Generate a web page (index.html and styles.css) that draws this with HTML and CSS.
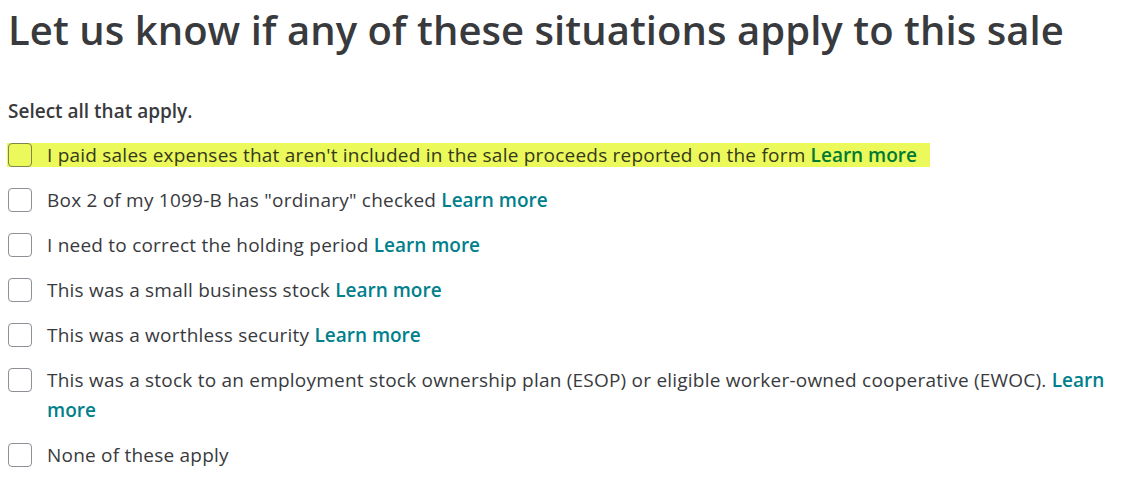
FILE: index.html
```html
<!DOCTYPE html>
<html lang="en">
<head>
<meta charset="utf-8">
<title>Situations</title>
<link rel="stylesheet" href="styles.css">
</head>
<body>
<h1 class="title">Let us know if any of these situations apply to this sale</h1>
<p class="instr">Select all that apply.</p>
<ul class="options">
  <li class="option highlight"><span class="box"></span><span class="label">I paid sales expenses that aren't included in the sale proceeds reported on the form <a class="link">Learn more</a></span></li>
  <li class="option"><span class="box"></span><span class="label">Box 2 of my 1099-B has "ordinary" checked <a class="link">Learn more</a></span></li>
  <li class="option"><span class="box"></span><span class="label">I need to correct the holding period <a class="link">Learn more</a></span></li>
  <li class="option"><span class="box"></span><span class="label">This was a small business stock <a class="link">Learn more</a></span></li>
  <li class="option"><span class="box"></span><span class="label">This was a worthless security <a class="link">Learn more</a></span></li>
  <li class="option"><span class="box"></span><span class="label">This was a stock to an employment stock ownership plan (ESOP) or eligible worker-owned cooperative (EWOC). <a class="link">Learn more</a></span></li>
  <li class="option"><span class="box"></span><span class="label">None of these apply</span></li>
</ul>
</body>
</html>
```
FILE: styles.css
```css
html, body {
  margin: 0;
  background: #ffffff;
}
body {
  padding: 0 8px;
  font-family: "Open Sans", "Noto Sans", sans-serif;
  color: #393a3d;
}
.title {
  margin: 0;
  padding-top: 4px;
  font-size: 40px;
  line-height: 52px;
  font-weight: 600;
  letter-spacing: 0.06px;
  color: #393a3d;
}
.instr {
  margin: 40px 0 0 0;
  font-size: 19px;
  line-height: 30px;
  font-weight: 600;
}
.options {
  list-style: none;
  margin: 14px 0 0 0;
  padding: 0;
  display: flex;
  flex-direction: column;
  gap: 15px;
}
.option {
  display: flex;
  align-items: flex-start;
  gap: 15px;
  font-size: 19px;
  line-height: 30px;
}
.label {
  letter-spacing: 0.22px;
}
.box {
  flex: 0 0 auto;
  width: 24px;
  height: 24px;
  margin-top: 3px;
  box-sizing: border-box;
  border: 1px solid #8d9096;
  border-radius: 4px;
  background: #ffffff;
}
.link {
  color: #00808c;
  font-weight: 600;
  letter-spacing: 0;
  cursor: pointer;
}
.highlight {
  align-self: flex-start;
  background: linear-gradient(#ebf95a, #ebf95a) no-repeat 0 3px / 100% 24px;
  margin-left: -1px;
  padding: 0 13px 0 1px;
}
.highlight .box {
  background: transparent;
  border-color: #7f8450;
}
.highlight .label {
  color: #35391a;
}
.highlight .link {
  color: #007a34;
}
```
